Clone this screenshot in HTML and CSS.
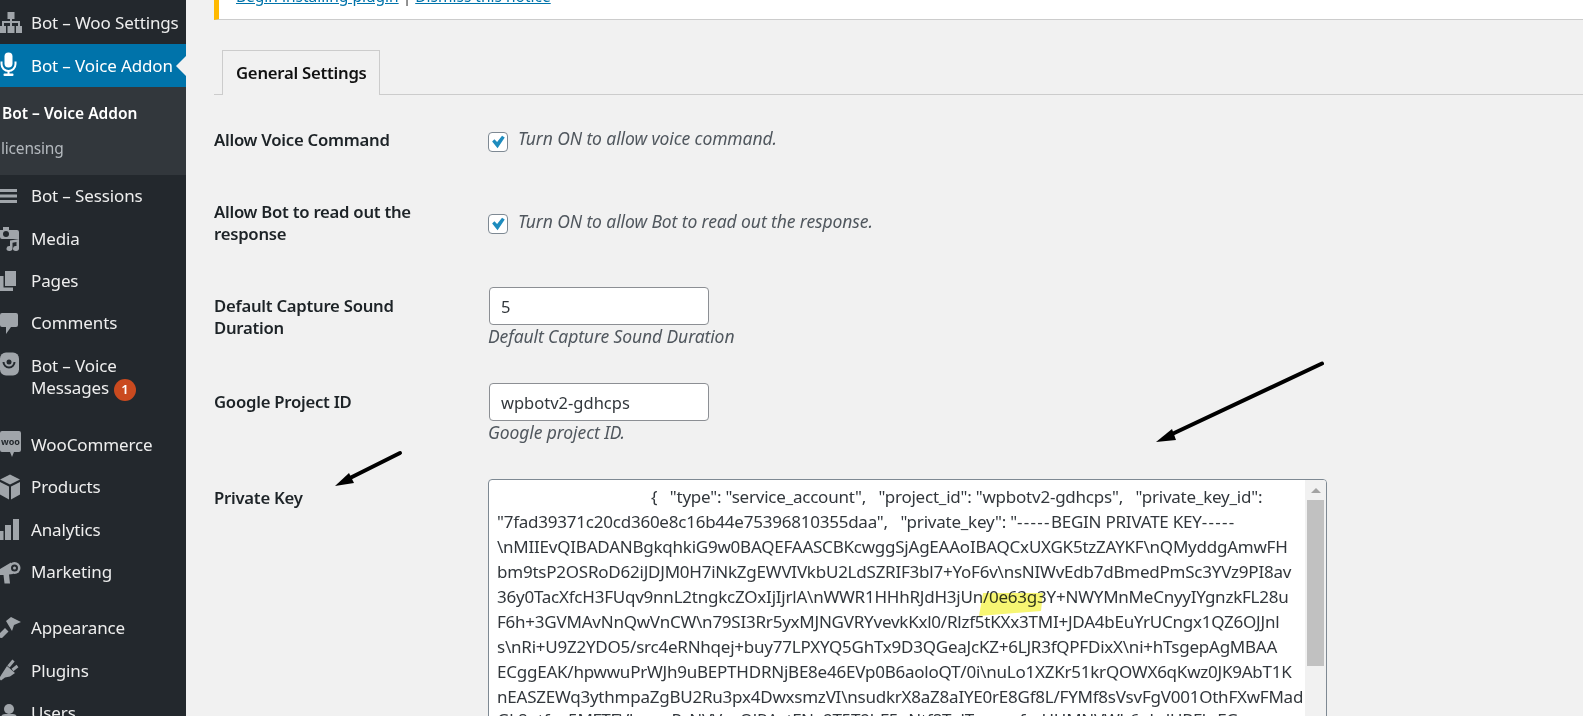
FILE: index.html
```html
<!DOCTYPE html>
<html lang="en">
<head>
<meta charset="utf-8">
<title>Bot – Voice Addon</title>
<link rel="stylesheet" href="styles.css">
</head>
<body>
<div class="page">
  <nav class="sidebar">
    <a class="item"><svg class="icon" viewBox="-3 -12 24 24"><rect x="7.5" y="-11" width="7" height="7"/><rect x="10" y="-4" width="2" height="3"/><rect x="2" y="-2" width="18" height="2"/><rect x="2" y="0" width="2" height="3"/><rect x="10" y="0" width="2" height="3"/><rect x="18" y="0" width="2" height="3"/><rect x="-1" y="3" width="7" height="7"/><rect x="7.5" y="3" width="7" height="7"/><rect x="16" y="3" width="6" height="7"/></svg><span>Bot – Woo Settings</span></a>
    <a class="item item-current"><svg class="icon" viewBox="-3 -12 24 24"><rect x="4.5" y="-12.5" width="8" height="15" rx="4"/><path class="line" d="M1.5 -3.5v2.5a7 7 0 0 0 14 0v-2.5"/><rect x="7.5" y="5" width="2" height="4"/><rect x="3.5" y="8.5" width="10" height="2.5" rx="1"/></svg><span>Bot – Voice Addon</span></a>
    <div class="submenu">
      <a class="sub sub-current">Bot – Voice Addon</a>
      <a class="sub">licensing</a>
    </div>
    <a class="item"><svg class="icon" viewBox="-3 -12 24 24"><rect x="0" y="-7" width="17" height="3"/><rect x="0" y="-1.5" width="17" height="3"/><rect x="0" y="4" width="17" height="3"/></svg><span>Bot – Sessions</span></a>
    <a class="item"><svg class="icon" viewBox="-3 -12 24 24"><path d="M0 -8h3v-3h6v3h8a2 2 0 0 1 2 2v7H2a2 2 0 0 1-2-2z"/><circle class="hole" cx="6" cy="-4" r="3"/><path d="M10 2.500l9-1.500v9.500a3 2.500 0 1 1-2.500-2.500v-4l-4 .7v5.800a3 2.500 0 1 1-2.500-2.500z"/></svg><span>Media</span></a>
    <a class="item"><svg class="icon" viewBox="-3 -12 24 24"><rect x="5" y="-10" width="11" height="15"/><path d="M0 -5h3.500v11.500H13V10H0z"/></svg><span>Pages</span></a>
    <a class="item"><svg class="icon" viewBox="-3 -12 24 24"><path d="M2 -10h14a2 2 0 0 1 2 2v10a2 2 0 0 1-2 2h-5l-5 7v-7H2a2 2 0 0 1-2-2V-8a2 2 0 0 1 2-2z"/></svg><span>Comments</span></a>
    <a class="item"><svg class="icon" viewBox="-3 -12 24 24"><rect x="0" y="-12.500" width="19" height="23" rx="6"/><circle class="hole" cx="9" cy="-3" r="2.500"/><path class="hole-line" d="M3.500 -3a5.500 5.500 0 0 0 11 0"/></svg><span>Bot – Voice<br>Messages<b class="badge">1</b></span></a>
    <div class="separator"></div>
    <a class="item"><svg class="icon" viewBox="-3 -12 24 24"><path d="M2 -13h17a2 2 0 0 1 2 2v17a2 2 0 0 1-2 2h-5l-2 5-2-5H2a2 2 0 0 1-2-2v-17a2 2 0 0 1 2-2z"/><text class="woo" x="10.500" y="1">woo</text></svg><span>WooCommerce</span></a>
    <a class="item"><svg class="icon" viewBox="-3 -12 24 24"><path d="M10 -12.500l10 5-10 5-10-5zM0 -5l9 4.500v13L0 7.500zM20 -5l-9 4.500v13l9-5z"/></svg><span>Products</span></a>
    <a class="item"><svg class="icon" viewBox="-3 -12 24 24"><rect x="0" y="2" width="3.500" height="9"/><rect x="5" y="-4" width="6" height="15"/><rect x="13" y="-10" width="6" height="21"/></svg><span>Analytics</span></a>
    <a class="item"><svg class="icon" viewBox="-3 -12 24 24"><path d="M0 -3L11 -9.500 13 2 9 2.500 10 11.500H4.500L3.500 3 0 3z"/><circle cx="14.500" cy="-4" r="6"/><circle class="hole" cx="14.500" cy="-4" r="3.500"/><circle cx="14.500" cy="-4" r="1.500"/></svg><span>Marketing</span></a>
    <div class="separator"></div>
    <a class="item"><svg class="icon" viewBox="-3 -12 24 24"><path d="M6 -7l5-4 10 5-7 3-2 6zM-1 6l6-6 3.500 3.500L2 10l-3-.5z"/></svg><span>Appearance</span></a>
    <a class="item"><svg class="icon" viewBox="-3 -12 24 24"><path d="M7 -4l8 7-5 3.500-5 1-4 3-2-2 2.500-4z"/><path class="line-thick" d="M8.500 -3.500l5-6M12.500 0l5-4"/></svg><span>Plugins</span></a>
    <a class="item"><svg class="icon" viewBox="-3 -12 24 24"><circle cx="9" cy="-4" r="5"/><rect x="1" y="1" width="16" height="11" rx="4"/></svg><span>Users</span></a>
  </nav>

  <main class="content">
    <div class="notice"><p class="notice-text"><a>Begin installing plugin</a> | <a>Dismiss this notice</a></p></div>
    <div class="tabs"><span class="tab">General Settings</span></div>

    <form class="form">
      <div class="row row-short">
        <div class="label">Allow Voice Command</div>
        <div class="field field-check-a"><span class="check"><svg viewBox="0 0 20 20"><path d="M3.500 9.500l2.500-2.500 3 3 5.500-7 3 2-8 12z"/></svg></span><em class="hint">Turn ON to allow voice command.</em></div>
      </div>
      <div class="row row-two">
        <div class="label">Allow Bot to read out the response</div>
        <div class="field field-check-b"><span class="check"><svg viewBox="0 0 20 20"><path d="M3.500 9.500l2.500-2.500 3 3 5.500-7 3 2-8 12z"/></svg></span><em class="hint">Turn ON to allow Bot to read out the response.</em></div>
      </div>
      <div class="row row-input">
        <div class="label">Default Capture Sound Duration</div>
        <div class="field"><div class="input">5</div><em class="desc">Default Capture Sound Duration</em></div>
      </div>
      <div class="row row-input">
        <div class="label">Google Project ID</div>
        <div class="field"><div class="input">wpbotv2-gdhcps</div><em class="desc">Google project ID.</em></div>
      </div>
      <div class="row">
        <div class="label">Private Key</div>
        <div class="field">
          <div class="textarea">
            <div class="lines">
              <div class="code code-first">{   "type": "service_account",   "project_id": "wpbotv2-gdhcps",   "private_key_id":</div>
              <div class="code">"7fad39371c20cd360e8c16b44e75396810355daa",   "private_key": "<span class="dash">-----</span>BEGIN PRIVATE KEY<span class="dash">-----</span></div>
              <div class="code">\nMIIEvQIBADANBgkqhkiG9w0BAQEFAASCBKcwggSjAgEAAoIBAQCxUXGK5tzZAYKF\nQMyddgAmwFH</div>
              <div class="code">bm9tsP2OSRoD62iJDJM0H7iNkZgEWVIVkbU2LdSZRIF3bl7+YoF6v\nsNIWvEdb7dBmedPmSc3YVz9PI8av</div>
              <div class="code">36y0TacXfcH3FUqv9nnL2tngkcZOxIjIjrlA\nWWR1HHhRJdH3jUn/0e63g3Y+NWYMnMeCnyyIYgnzkFL28u</div>
              <div class="code">F6h+3GVMAvNnQwVnCW\n79SI3Rr5yxMJNGVRYvevkKxl0/Rlzf5tKXx3TMI+JDA4bEuYrUCngx1QZ6OJJnl</div>
              <div class="code">s\nRi+U9Z2YDO5/src4eRNhqej+buy77LPXYQ5GhTx9D3QGeaJcKZ+6LJR3fQPFDixX\ni+hTsgepAgMBAA</div>
              <div class="code">ECggEAK/hpwwuPrWJh9uBEPTHDRNjBE8e46EVp0B6aoloQT/0i\nuLo1XZKr51krQOWX6qKwz0JK9AbT1K</div>
              <div class="code">nEASZEWq3ythmpaZgBU2Ru3px4DwxsmzVI\nsudkrX8aZ8aIYE0rE8Gf8L/FYMf8sVsvFgV001OthFXwFMad</div>
              <div class="code code-last">Gk8ntfqv5MFTFVhwqxPsNVVcpOlRAytFNa9T5T9hF5oNtf8TnlTwmrpfxcHHMNVWh6ghdUBFkrFG</div>
            </div>
            <div class="scrollbar"><span class="scroll-up"></span><span class="scroll-thumb"></span></div>
          </div>
        </div>
      </div>
    </form>
  </main>

  <svg class="annotations" viewBox="0 0 1583 716">
    <polygon class="highlight" points="983,593 1043,593 1041,611 979,616"/>
    <line class="arrow-line" x1="1322" y1="363.500" x2="1170" y2="435"/>
    <polygon class="arrow-head" points="1156,442 1172,429 1176,440"/>
    <line class="arrow-line" x1="400" y1="453" x2="348" y2="479"/>
    <polygon class="arrow-head" points="335,486 349,473 354,483"/>
  </svg>
</div>
</body>
</html>
```
FILE: styles.css
```css
* { box-sizing: border-box; }
html, body { margin: 0; height: 716px; overflow: hidden; }
body { background: #f1f1f1; font-family: "Noto Sans", "Liberation Sans", sans-serif; font-size: 16px; color: #23282d; }
.page { display: flex; position: relative; width: 1583px; height: 716px; overflow: hidden; }

/* sidebar */
.sidebar { flex: 0 0 186px; background: #23282d; padding-top: 2px; overflow: hidden; color: #eee; font-size: 17px; letter-spacing: -0.13px; }
.item { display: flex; position: relative; padding: 10.400px 0 9.600px; line-height: 22.400px; }
.item span { display: block; white-space: nowrap; }
.icon { flex: 0 0 24px; width: 24px; height: 24px; margin: -1.400px 10px -0.600px -3px; overflow: visible; fill: #a0a5aa; }
.line { fill: none; stroke: #fff; stroke-width: 2; }
.line-thick { fill: none; stroke: #a0a5aa; stroke-width: 3; }
.hole { fill: #23282d; }
.hole-line { fill: none; stroke: #23282d; stroke-width: 2; }
.woo { fill: #23282d; font-size: 9px; font-weight: 700; text-anchor: middle; letter-spacing: 0; }
.item-current { background: #0073aa; color: #fff; }
.item-current .icon { fill: #fff; }
.item-current::after { content: ""; position: absolute; right: 0; top: 50%; margin-top: -10px; border: 10px solid transparent; border-right-color: #f1f1f1; border-left-width: 0; }
.submenu { background: #32373c; padding: 9px 0 9px 2px; font-size: 15.500px; }
.sub { display: block; line-height: 35px; color: #b4b9be; margin-left: -1px; letter-spacing: -0.2px; }
.sub-current { color: #fff; font-weight: 600; margin-left: 0; letter-spacing: 0; }
.separator { height: 14.200px; }
.badge { display: inline-flex; align-items: center; justify-content: center; width: 22px; height: 22px; margin: -3px 0 -3px 5px; border-radius: 50%; background: #ca4a1f; color: #fff; font-size: 13px; font-weight: 600; vertical-align: middle; letter-spacing: 0; line-height: 1; }

/* content */
.content { flex: 1; min-width: 0; padding-left: 28px; }
.notice { display: flex; align-items: flex-end; height: 20px; background: #fff; border-left: 5px solid #ffb900; border-bottom: 1px solid #ccc; overflow: hidden; padding: 0 0 12px 17px; }
.notice-text { margin: 0; line-height: 22px; white-space: nowrap; color: #444; font-size: 15.500px; }
.notice-text a { color: #0073aa; text-decoration: underline; }
.tabs { display: flex; height: 75px; padding: 30px 0 0 8px; border-bottom: 1px solid #ccc; }
.tab { display: flex; align-items: center; height: 45px; padding: 0 12px 2px 13px; border: 1px solid #ccc; border-bottom: 0; background: #f1f1f1; color: #111; font-weight: 600; font-size: 16.700px; letter-spacing: -0.25px; margin-bottom: -1px; }

.form { padding-top: 11px; }
.row { display: grid; grid-template-columns: 275px 1fr; }
.row-short { height: 72px; }
.row-two { height: 94px; }
.row-input { height: 96px; }
.label { padding: 23px 60px 0 0; line-height: 22px; font-weight: 600; font-size: 16.700px; letter-spacing: -0.25px; color: #1d2327; }
.field { padding-top: 15px; }
.field-check-a, .field-check-b { display: flex; align-items: flex-start; gap: 10px; margin-left: -1px; }
.field-check-a { padding-top: 26px; }
.field-check-b { padding-top: 36px; }
.check { flex: 0 0 20px; width: 20px; height: 20px; background: #fff; border: 1px solid #7e8993; border-radius: 4px; }
.check svg { display: block; width: 18px; height: 18px; fill: #1e8cbe; }
.hint, .desc { color: #50575e; font-size: 17.500px; font-style: italic; line-height: 22px; letter-spacing: -0.1px; }
.hint { margin-top: -5px; white-space: nowrap; }
.field-check-b .hint { margin-top: -4px; }
.input { width: 220px; height: 38px; padding: 1px 11px 0; background: #fff; border: 1px solid #8c8f94; border-radius: 4px; color: #32373c; line-height: 36px; font-size: 16.500px; }
.desc { display: block; margin: 0 0 0 -1px; white-space: nowrap; }
.textarea { display: flex; width: 839px; height: 300px; margin-left: -1px; background: #fff; border: 1px solid #7e8993; border-radius: 4px; overflow: hidden; }
.lines { flex: 1; min-width: 0; padding: 4px 8px 0 8px; overflow: hidden; }
.code { height: 25px; line-height: 25px; white-space: pre; color: #32373c; font-size: 17px; letter-spacing: -0.23px; }
.code-first { padding-left: 154px; }
.code-last { margin-top: -2px; }
.dash { letter-spacing: 1.300px; }
.scrollbar { display: flex; flex-direction: column; align-items: center; flex: 0 0 21px; background: #f1f1f1; }
.scroll-up { width: 0; height: 0; margin: 8px 0 7px; border: 5px solid transparent; border-top: 0; border-bottom-color: #a3a3a3; }
.scroll-thumb { width: 17px; height: 166px; background: #c1c1c1; }

/* screenshot annotations */
.annotations { position: absolute; left: 0; top: 0; width: 1583px; height: 716px; pointer-events: none; }
.highlight { fill: #f6f45a; fill-opacity: .85; mix-blend-mode: multiply; }
.arrow-line { stroke: #000; stroke-width: 4; stroke-linecap: round; }
.arrow-head { fill: #000; }
```
